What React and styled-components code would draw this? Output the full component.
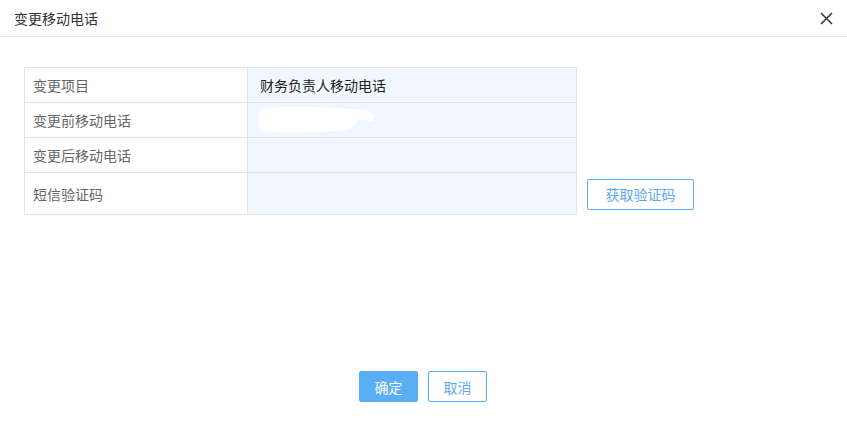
import React from 'react';
import styled, { createGlobalStyle } from 'styled-components';

const GlobalStyle = createGlobalStyle`
  html, body {
    margin: 0;
    padding: 0;
    background: #fff;
  }
  body {
    font-family: "Microsoft YaHei", "Noto Sans CJK SC", "Noto Sans", sans-serif;
    font-size: 14px;
    color: #333;
  }
`;

const Dialog = styled.div`
  display: flex;
  flex-direction: column;
  width: 100%;
  height: 100vh;
  box-sizing: border-box;
`;

const Header = styled.div`
  display: flex;
  align-items: center;
  justify-content: space-between;
  height: 36px;
  padding: 0 13px 0 14px;
  border-bottom: 1px solid #e8e8e8;
`;

const Title = styled.div`
  font-size: 14px;
  color: #333;
`;

const CloseButton = styled.button`
  display: flex;
  align-items: center;
  justify-content: center;
  width: 16px;
  height: 16px;
  padding: 0;
  border: none;
  background: none;
  cursor: pointer;
`;

const Body = styled.div`
  flex: 1;
  padding: 30px 24px 0;
`;

const FormGrid = styled.div`
  display: grid;
  grid-template-columns: 224px 329px auto;
  grid-template-rows: 36px 35px 35px 42px;
  align-items: stretch;
`;

const LabelCell = styled.div`
  display: flex;
  align-items: center;
  padding-left: 8px;
  border: 1px solid #e4e4e4;
  border-top: ${p => (p.$first ? '1px solid #e4e4e4' : 'none')};
  color: #666;
  box-sizing: border-box;
`;

const ValueCell = styled.div`
  display: flex;
  align-items: center;
  padding-left: 12px;
  background: #f0f7fe;
  border-right: 1px solid #e4e4e4;
  border-bottom: 1px solid #e4e4e4;
  border-top: ${p => (p.$first ? '1px solid #e4e4e4' : 'none')};
  color: #222;
  box-sizing: border-box;
`;

const ExtraCell = styled.div`
  display: flex;
  align-items: center;
  padding-left: 10px;
`;

const Button = styled.button`
  height: 31px;
  width: ${p => p.$w}px;
  padding: 0;
  border-radius: 2px;
  font-family: inherit;
  font-size: 14px;
  cursor: pointer;
  border: 1px solid #5aaef3;
  background: ${p => (p.$primary ? '#5aaef3' : '#fff')};
  color: ${p => (p.$primary ? '#fff' : '#5aa9f0')};
`;

const Footer = styled.div`
  display: flex;
  justify-content: center;
  gap: 10px;
  padding: 0 1px 20px 0;
`;

const rows = [
  { label: '变更项目', value: '财务负责人移动电话' },
  { label: '变更前移动电话', redacted: true },
  { label: '变更后移动电话' },
  { label: '短信验证码', action: '获取验证码' },
];

function Redaction() {
  return (
    <svg width="120" height="30" viewBox="0 0 120 30" style={{ marginLeft: -2 }}>
      <path
        d="M6 3 C30 1 70 2 96 4 C106 4 110 5 112 7 C118 9 118 16 112 16 C108 16 104 14 100 14 C98 18 96 24 88 25 C60 28 30 28 6 27 C1 26 0 22 1 14 C1 7 2 4 6 3 Z"
        fill="#fff"
      />
    </svg>
  );
}

export default function App() {
  return (
    <>
      <GlobalStyle />
      <Dialog>
        <Header>
          <Title>变更移动电话</Title>
          <CloseButton aria-label="关闭">
            <svg width="13" height="13" viewBox="0 0 13 13">
              <path d="M1 1 L12 12 M12 1 L1 12" stroke="#333" strokeWidth="1.5" />
            </svg>
          </CloseButton>
        </Header>
        <Body>
          <FormGrid>
            {rows.map((row, i) => (
              <React.Fragment key={row.label}>
                <LabelCell $first={i === 0}>{row.label}</LabelCell>
                <ValueCell $first={i === 0}>
                  {row.redacted ? <Redaction /> : row.value}
                </ValueCell>
                <ExtraCell>
                  {row.action && <Button $w={107}>{row.action}</Button>}
                </ExtraCell>
              </React.Fragment>
            ))}
          </FormGrid>
        </Body>
        <Footer>
          <Button $primary $w={59}>确定</Button>
          <Button $w={59}>取消</Button>
        </Footer>
      </Dialog>
    </>
  );
}
